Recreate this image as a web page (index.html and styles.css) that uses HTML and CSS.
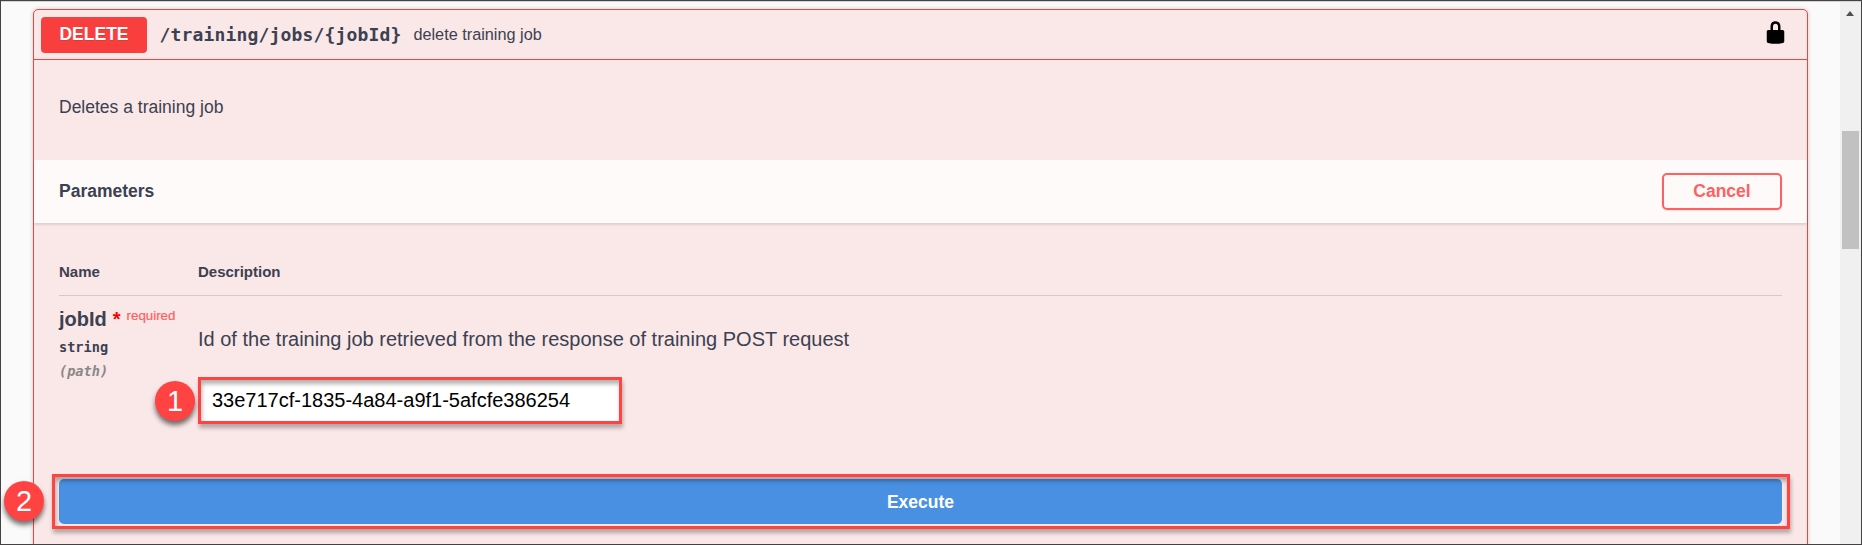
FILE: index.html
```html
<!DOCTYPE html>
<html lang="en">
<head>
<meta charset="utf-8">
<title>Delete training job</title>
<link rel="stylesheet" href="styles.css">
</head>
<body>
<div class="frame">
  <main class="page">
    <section class="opblock">
      <header class="summary">
        <span class="method">DELETE</span>
        <span class="path">/training/jobs/{jobId}</span>
        <span class="summary-text">delete training job</span>
        <svg class="lock" viewBox="0 0 20 20"><path d="M15.8 8H14V5.6C14 2.703 12.665 1 10 1 7.334 1 6 2.703 6 5.6V8H4c-.553 0-1 .646-1 1.199V17c0 .549.428 1.139.951 1.307l1.197.387C5.672 18.861 6.55 19 7.1 19h5.8c.549 0 1.428-.139 1.951-.307l1.196-.387c.524-.167.953-.757.953-1.306V9.199C17 8.646 16.352 8 15.8 8zM12 8H8V5.199C8 3.754 8.797 3 10 3c1.203 0 2 .754 2 2.199V8z"/></svg>
      </header>
      <div class="description">Deletes a training job</div>
      <div class="section-header">
        <h4 class="section-title">Parameters</h4>
        <button class="cancel">Cancel</button>
      </div>
      <div class="params">
        <div class="params-head"><span>Name</span><span>Description</span></div>
        <div class="params-row">
          <div class="param-name">
            <div class="name">jobId<span class="star">*</span><span class="required">required</span></div>
            <div class="type">string</div>
            <div class="in">(path)</div>
          </div>
          <div class="param-body">
            <p class="param-text">Id of the training job retrieved from the response of training POST request</p>
            <div class="field"><span class="value">33e717cf-1835-4a84-a9f1-5afcfe386254</span><span class="marker marker-one">1</span></div>
          </div>
        </div>
      </div>
      <div class="execute-frame"><button class="execute">Execute</button><span class="marker marker-two">2</span></div>
    </section>
  </main>
  <aside class="scrollbar"><span class="arrow"></span><span class="thumb"></span></aside>
</div>
</body>
</html>
```
FILE: styles.css
```css
* { box-sizing: border-box; }
body { margin: 0; font-family: "Liberation Sans", Arial, sans-serif; color: #3b4151; }
.frame { display: flex; width: 1862px; height: 545px; border: 1px solid #444243; background: #fafafa; overflow: hidden; }
.page { flex: 1; padding: 8px 32px 0 32px; box-shadow: inset 0 1px 0 #d4d2d3; }
.opblock { height: 570px; border: 1px solid #f04444; border-radius: 5px; background: #fae7e7; box-shadow: 0 0 4px rgba(0,0,0,.19); }
.summary { display: flex; align-items: center; height: 50px; padding: 0 19px 0 7px; border-bottom: 1px solid #f04444; }
.method { width: 106px; height: 36px; margin-top: 1px; border-radius: 4px; background: #f93e3e; color: #fff; font-size: 17.5px; font-weight: 700; line-height: 35px; text-align: center; text-shadow: 0 1px 0 rgba(0,0,0,.1); }
.path { margin-left: 12.5px; font: 700 18px/24px "DejaVu Sans Mono", monospace; letter-spacing: .16px; }
.summary-text { margin-left: 12px; font-size: 16.25px; }
.lock { width: 25px; height: 25px; margin: -4px 0 0 auto; fill: #000; }
.description { height: 100px; padding: 36px 25px 0; font-size: 17.5px; line-height: 22px; }
.section-header { display: flex; align-items: center; justify-content: space-between; height: 63px; padding: 0 25px; background: #fefaf9; box-shadow: 0 2px 2px rgba(0,0,0,.1); }
.section-title { margin: 0; font-size: 17.5px; }
.cancel { width: 120px; height: 37px; padding: 0; border: 2px solid #ff6060; border-radius: 5px; background: transparent; box-shadow: 0 1px 2px rgba(0,0,0,.1); color: #ff6060; font: 700 17.5px "Liberation Sans", Arial, sans-serif; }
.params { height: 251px; padding: 37px 25px 0; }
.params-head { display: grid; grid-template-columns: 139px 1fr; height: 36px; border-bottom: 1px solid #d8c6ca; font-size: 15px; font-weight: 700; line-height: 23px; }
.params-row { display: grid; grid-template-columns: 139px 1fr; }
.name { display: flex; height: 40px; padding-top: 12px; font-size: 20px; font-weight: 700; line-height: 23px; white-space: nowrap; }
.star { margin-left: 6px; color: #f00; font-size: 20px; }
.required { margin: -4px 0 0 6px; color: #ff6060; font-size: 13.3px; font-weight: 400; -webkit-text-stroke: .2px #ff6060; }
.type { font: 700 13.6px/22px "DejaVu Sans Mono", monospace; }
.in { margin-top: 2px; color: #888; font: italic 700 13.6px/22px "DejaVu Sans Mono", monospace; }
.param-text { margin: 31px 0 0; font-size: 20px; line-height: 24px; }
.field { position: relative; display: flex; width: 424px; height: 47px; margin-top: 26px; padding: 0 11px; border: 3px solid #ff4343; background: #fff; box-shadow: 1px 4px 4px rgba(0,0,0,.28), inset 1px 4px 4px rgba(0,0,0,.3); }
.value { color: #000; font-size: 20px; line-height: 40px; }
.marker { position: absolute; width: 40px; height: 40px; border-radius: 50%; background: #ff4343; box-shadow: 0 4px 5px rgba(0,0,0,.55); color: #fff; font-size: 29px; line-height: 41px; text-align: center; }
.marker-one { left: -46px; top: 1px; }
.execute-frame { position: relative; height: 55px; margin: 0 17px 0 18px; padding: 2px 5px 2px 4px; border: 3px solid #ff4343; box-shadow: 1px 4px 4px rgba(0,0,0,.28); }
.execute-frame::after { content: ""; position: absolute; inset: 0; box-shadow: inset 1px 4px 4px rgba(0,0,0,.3); }
.execute { display: block; width: 100%; height: 45px; padding: 1px 0 0; border: 0; border-radius: 5px; background: #4990e2; color: #fff; font: 700 17.5px "Liberation Sans", Arial, sans-serif; }
.marker-two { left: -51px; top: 4px; }
.scrollbar { width: 21px; padding: 10px 2px 0; background: #f0f0f0; box-shadow: inset 0 1px 0 #d4d2d3; }
.arrow { display: block; margin-left: 4px; width: 0; border: 4.5px solid transparent; border-top: 0; border-bottom: 5px solid #505050; }
.thumb { display: block; width: 17px; height: 118px; margin-top: 115px; background: #c1c1c1; }
```
